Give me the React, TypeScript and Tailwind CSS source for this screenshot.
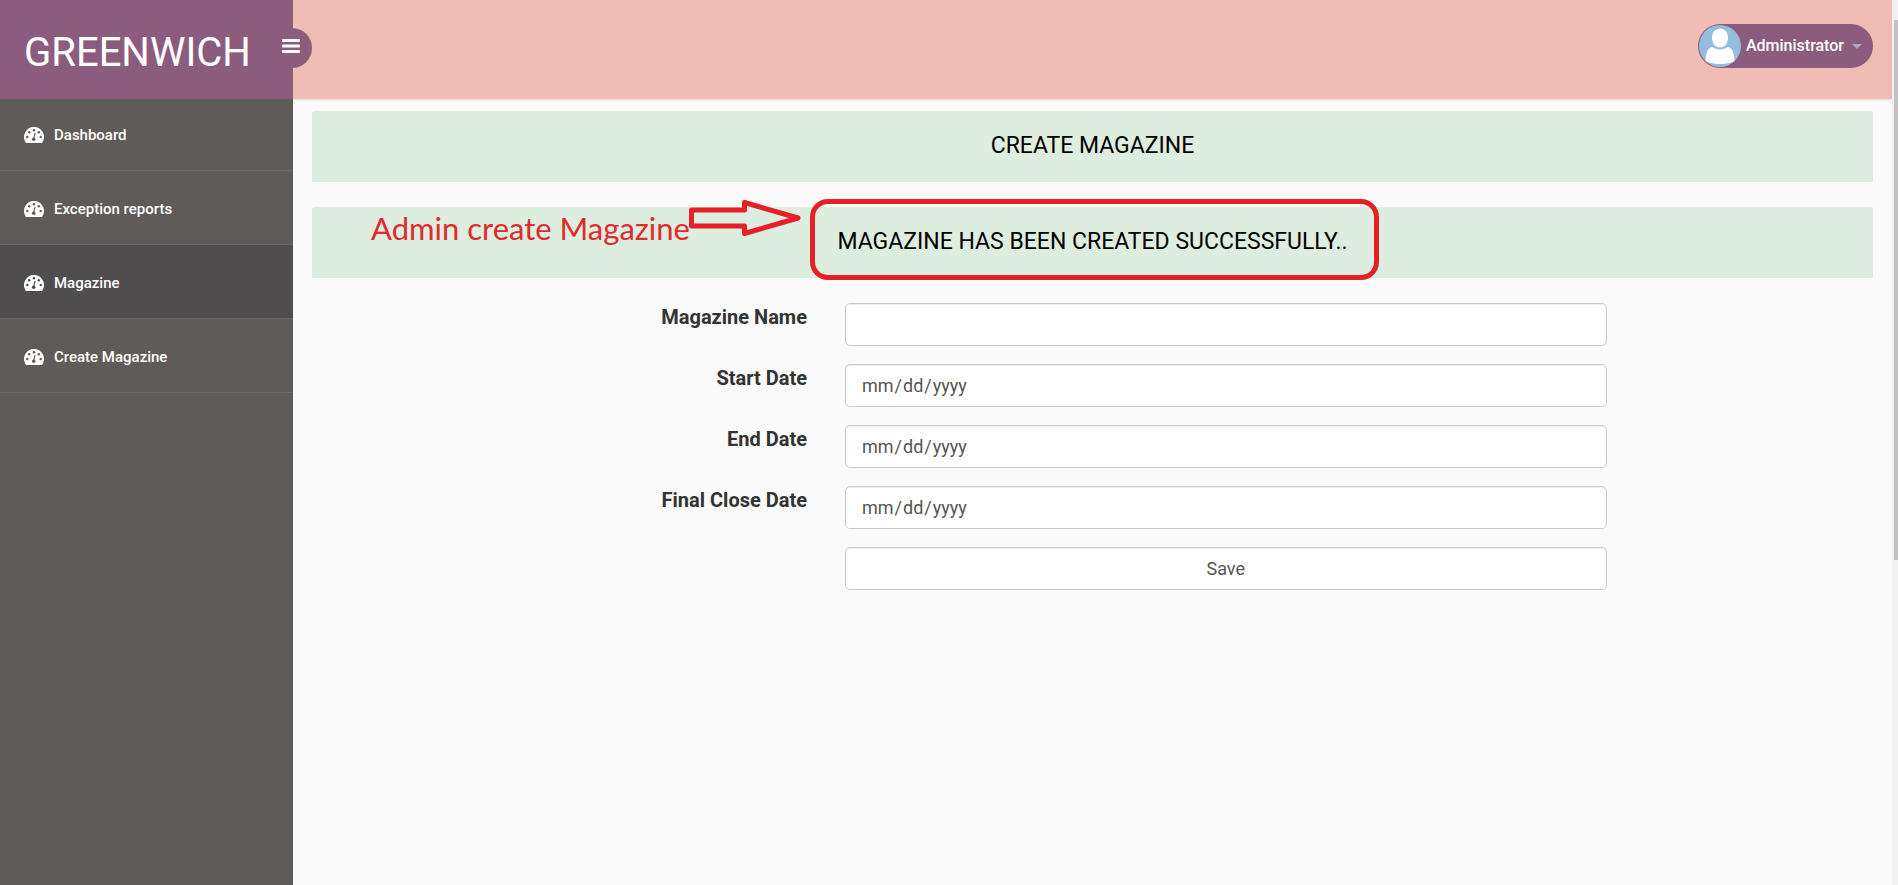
function DashboardIcon({ active }: { active: boolean }) {
  return (
    <svg viewBox="0 0 20 18" className="h-[18px] w-5 shrink-0" aria-hidden="true">
      <path
        fill="#fff"
        d="M10 0a10 10 0 0 1 8.4 15.4c-.3.4-.7.6-1.100.6H2.700c-.4 0-.8-.2-1.100-.6A10 10 0 0 1 10 0Z"
      />
      <g className={active ? "fill-[#4f4d4e]" : "fill-[#5f5b59]"}>
        <circle cx="3.300" cy="10" r="1.200" />
        <circle cx="5.200" cy="5.300" r="1.200" />
        <circle cx="10" cy="3.200" r="1.200" />
        <circle cx="14.800" cy="5.300" r="1.200" />
        <circle cx="16.700" cy="10" r="1.200" />
        <circle cx="9.700" cy="12.300" r="1.800" />
        <path d="m9.200 11 1.400-5.200 1 .3-1.300 5.200Z" />
      </g>
    </svg>
  );
}

function Avatar() {
  return (
    <svg viewBox="0 0 42 42" className="size-[42px] shrink-0" aria-hidden="true">
      <circle cx="21" cy="21" r="21" fill="#95bbdd" />
      <path
        fill="#fff"
        d="M21 3.500c5 0 8 4 8 9.500S25.500 22.500 21 22.500s-8-4-8-9.500S16 3.500 21 3.500Z"
      />
      <path
        fill="#fff"
        d="M13.500 22c4 3.300 11 3.300 15 0 4.500 1 6.500 4 7 14C30 40 12 40 6.500 36c.5-10 2.500-13 7-14Z"
      />
    </svg>
  );
}

const links = ["Dashboard", "Exception reports", "Magazine", "Create Magazine"];

const fields = [
  { id: "name", label: "Magazine Name", type: "text" },
  { id: "start", label: "Start Date", type: "date" },
  { id: "end", label: "End Date", type: "date" },
  { id: "final", label: "Final Close Date", type: "date" },
];

export default function App() {
  return (
    <div className="flex min-h-screen bg-[#fafafa] font-[Roboto,sans-serif]">
      <aside className="flex w-[293px] shrink-0 flex-col bg-[#5f5b59]">
        <div className="relative flex h-[99px] items-center bg-[#8b5c7e] pt-[6px] pl-6">
          <a href="#" className="text-[40px] leading-none text-white">
            GREENWICH
          </a>
          <button
            aria-label="Toggle menu"
            className="absolute top-7 -right-[19px] z-10 flex h-10 w-10 items-start rounded-full bg-[#8b5c7e] pt-[11px] pl-[10px]"
          >
            <svg viewBox="0 0 18 14" className="h-[14px] w-[18px]" fill="#fff" aria-hidden="true">
              <rect width="18" height="3" rx="0.800" />
              <rect y="5.500" width="18" height="3" rx="0.800" />
              <rect y="11" width="18" height="3" rx="0.800" />
            </svg>
          </button>
        </div>
        <nav>
          {links.map((name) => (
            <a
              key={name}
              href="#"
              aria-current={name === "Magazine" ? "page" : undefined}
              className="flex h-[74px] items-center gap-[10px] border-b border-[#6b6866] pt-1 pl-6 text-[15px] font-medium text-white first:h-[72px] first:pt-[2px] aria-[current=page]:bg-[#4f4d4e]"
            >
              <DashboardIcon active={name === "Magazine"} />
              {name}
            </a>
          ))}
        </nav>
      </aside>

      <div className="min-w-0 flex-1">
        <header className="flex h-[99px] items-start justify-end bg-[#f0bcb4] pt-6 pr-[19px] shadow-sm">
          <button className="flex h-11 items-center rounded-full bg-[#8b5c7e] pr-[11px] pl-px text-base font-medium text-white">
            <Avatar />
            <span className="ml-[5px]">Administrator</span>
            <svg viewBox="0 0 10 5" className="ml-2 h-[5px] w-[10px]" fill="#b3a5bd" aria-hidden="true">
              <path d="M0 0h10L5 5Z" />
            </svg>
          </button>
        </header>

        <main className="pt-3">
          <div className="flex flex-col gap-[25px] px-[19px] text-[23px] text-black">
            <h1 className="flex h-[71px] items-center justify-center rounded-t-[3px] bg-[#ddeddf]">
              CREATE MAGAZINE
            </h1>
            <div className="relative flex h-[71px] items-center justify-center rounded-t-[3px] bg-[#ddeddf]">
              <p role="status">MAGAZINE HAS BEEN CREATED SUCCESSFULLY..</p>
              <div className="absolute -top-2 left-1/2 h-[81px] w-[569px] -translate-x-[283px] rounded-[18px] border-[5px] border-[#e71f26]" />
              <p className="absolute top-0 left-[59px] text-[31px] leading-[42px] whitespace-nowrap text-[#e02a2c] font-[Lato,sans-serif]">
                Admin create Magazine
              </p>
              <svg
                viewBox="0 0 116 40"
                className="absolute -top-[9px] left-[376px] h-10 w-[116px]"
                fill="none"
                stroke="#e71f26"
                strokeWidth="5"
                strokeLinejoin="round"
                aria-hidden="true"
              >
                <path d="M3.500 12h53V4.500L110 20 56.500 35.500V28H3.500Z" />
              </svg>
            </div>
          </div>

          <form className="mt-[25px] flex flex-col gap-[18px]">
            {fields.map((f) => (
              <div key={f.id} className="grid grid-cols-12">
                <label
                  htmlFor={f.id}
                  className="col-span-4 pr-[19px] text-right text-xl leading-7 font-bold text-[#333]"
                >
                  {f.label}
                </label>
                <div className="col-span-6 px-[19px]">
                  <input
                    id={f.id}
                    type={f.type}
                    className="block h-[43px] w-full rounded-[5px] border border-[#ccc] bg-white px-[15px] text-lg text-[#555] shadow-[inset_0_1px_1px_rgba(0,0,0,0.075)] [&::-webkit-calendar-picker-indicator]:hidden"
                  />
                </div>
              </div>
            ))}
            <div className="grid grid-cols-12">
              <div className="col-span-6 col-start-5 px-[19px]">
                <button
                  type="submit"
                  className="block h-[43px] w-full rounded-[5px] border border-[#ccc] bg-white text-lg text-[#555] shadow-[inset_0_1px_1px_rgba(0,0,0,0.075)]"
                >
                  Save
                </button>
              </div>
            </div>
          </form>
        </main>
      </div>

      <div className="w-[6px] shrink-0 bg-[#f1f1f1] pt-5 pl-[2px]">
        <div className="h-[540px] bg-[#c1c1c1]" />
      </div>
    </div>
  );
}
